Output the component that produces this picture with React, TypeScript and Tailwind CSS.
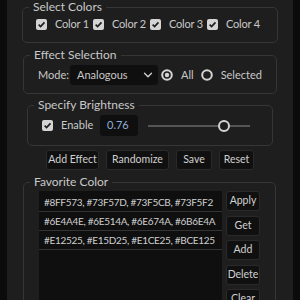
import { ChevronDown } from "lucide-react";

const font = { fontFamily: "Lato, 'Liberation Sans', sans-serif" };

function Check() {
  return (
    <span className="w-[11px] h-[11px] rounded-[2px] bg-[#d4d4d4] flex items-center justify-center shrink-0">
      <svg width="9" height="9" viewBox="0 0 10 10">
        <path d="M1.8 5.2 L4 7.4 L8.3 2.6" fill="none" stroke="#1c1c1c" strokeWidth="1.8" />
      </svg>
    </span>
  );
}

function Radio({ on }: { on: boolean }) {
  return (
    <svg width="12" height="12" viewBox="0 0 12 12" className="shrink-0">
      <circle cx="6" cy="6" r="4.8" fill="none" stroke="#d4d4d4" strokeWidth="2" />
      {on && <circle cx="6" cy="6" r="2.2" fill="#d4d4d4" />}
    </svg>
  );
}

function Legend({ children }: { children: string }) {
  return <legend className="ml-[6px] px-[4px] text-[12px] leading-[14px] text-[#c8c8c8]">{children}</legend>;
}

function Btn({ label, w }: { label: string; w: string }) {
  return (
    <button className={`${w} h-[20px] rounded-[3px] bg-[#101010] border border-[#2a2a2a] text-[10.5px] text-[#d0d0d0] flex items-center justify-center`}>
      {label}
    </button>
  );
}

const favorites = [
  "#8FF573, #73F57D, #73F5CB, #73F5F2",
  "#6E4A4E, #6E514A, #6E674A, #6B6E4A",
  "#E12525, #E15D25, #E1CE25, #BCE125",
];

export default function App() {
  return (
    <div className="w-[300px] h-[300px] bg-[#0b0b0b] flex overflow-hidden" style={font}>
      <div className="ml-[7px] w-[286px] h-full bg-[#1e1e1e] flex flex-col text-[#c8c8c8] text-[11px]">
        {/* Select Colors */}
        <fieldset className="mx-[15px] border border-[#363636] rounded-[5px]">
          <Legend>Select Colors</Legend>
          <div className="h-[20px] mb-[8px] pl-[13px] flex items-center">
            {["Color 1", "Color 2", "Color 3", "Color 4"].map((c) => (
              <div key={c} className="w-[57px] flex items-center gap-[8px]">
                <Check />
                <span className="tracking-[-0.2px]">{c}</span>
              </div>
            ))}
          </div>
        </fieldset>

        {/* Effect Selection */}
        <fieldset className="mt-[5px] mx-[16px] border border-[#363636] rounded-[5px]">
          <Legend>Effect Selection</Legend>
          <div className="h-[20px] mt-[3px] mb-[8px] pl-[14px] flex items-center">
            <span className="w-[32px]">Mode:</span>
            <div className="w-[88px] h-[20px] rounded-[3px] bg-[#0f0f0f] flex items-center pl-[7px] pr-[3px]">
              <span className="flex-1">Analogous</span>
              <ChevronDown size={14} strokeWidth={2.2} color="#d4d4d4" />
            </div>
            <div className="ml-[3px] flex items-center gap-[8px]">
              <Radio on />
              <span>All</span>
            </div>
            <div className="ml-[7px] flex items-center gap-[8px]">
              <Radio on={false} />
              <span>Selected</span>
            </div>
          </div>
        </fieldset>

        {/* Specify Brightness */}
        <fieldset className="mt-[4px] mx-[20px] border border-[#363636] rounded-[5px]">
          <Legend>Specify Brightness</Legend>
          <div className="h-[21px] mt-[3px] mb-[9px] pl-[14px] flex items-center">
            <Check />
            <span className="ml-[8px] w-[39px]">Enable</span>
            <div className="w-[38px] h-[21px] rounded-[3px] bg-[#0f0f0f] flex items-center pl-[7px] text-[#8fb0d8]">
              0.76
            </div>
            <div className="ml-[10px] w-[102px] h-[12px] relative flex items-center">
              <div className="w-full h-[2px] bg-[#555555]" />
              <div className="absolute left-[70px] top-0 w-[12px] h-[12px] rounded-full border-2 border-[#d4d4d4] bg-[#1e1e1e]" />
            </div>
          </div>
        </fieldset>

        {/* actions */}
        <div className="mt-[4px] flex justify-center gap-[7px]">
          <Btn label="Add Effect" w="w-[53px]" />
          <Btn label="Randomize" w="w-[63px]" />
          <Btn label="Save" w="w-[36px]" />
          <Btn label="Reset" w="w-[35px]" />
        </div>

        {/* Favorite Color */}
        <fieldset className="mt-[5px] ml-[16px] mr-[18px] border border-[#363636] rounded-[5px]">
          <Legend>Favorite Color</Legend>
          <div className="mt-[2px] px-[15px] flex gap-[4px]">
            <div className="w-[183px] h-[130px] bg-[#0f0f0f] pt-[2px]">
              {favorites.map((f) => (
                <div
                  key={f}
                  className="h-[19px] border-b border-[#333333] pl-[5px] flex items-center text-[10px] tracking-[-0.3px] text-[#d0d0d0]"
                >
                  {f}
                </div>
              ))}
            </div>
            <div className="flex flex-col gap-[4.5px]">
              <Btn label="Apply" w="w-[34px]" />
              <Btn label="Get" w="w-[34px]" />
              <Btn label="Add" w="w-[34px]" />
              <Btn label="Delete" w="w-[34px]" />
              <Btn label="Clear" w="w-[34px]" />
            </div>
          </div>
        </fieldset>
      </div>
    </div>
  );
}
